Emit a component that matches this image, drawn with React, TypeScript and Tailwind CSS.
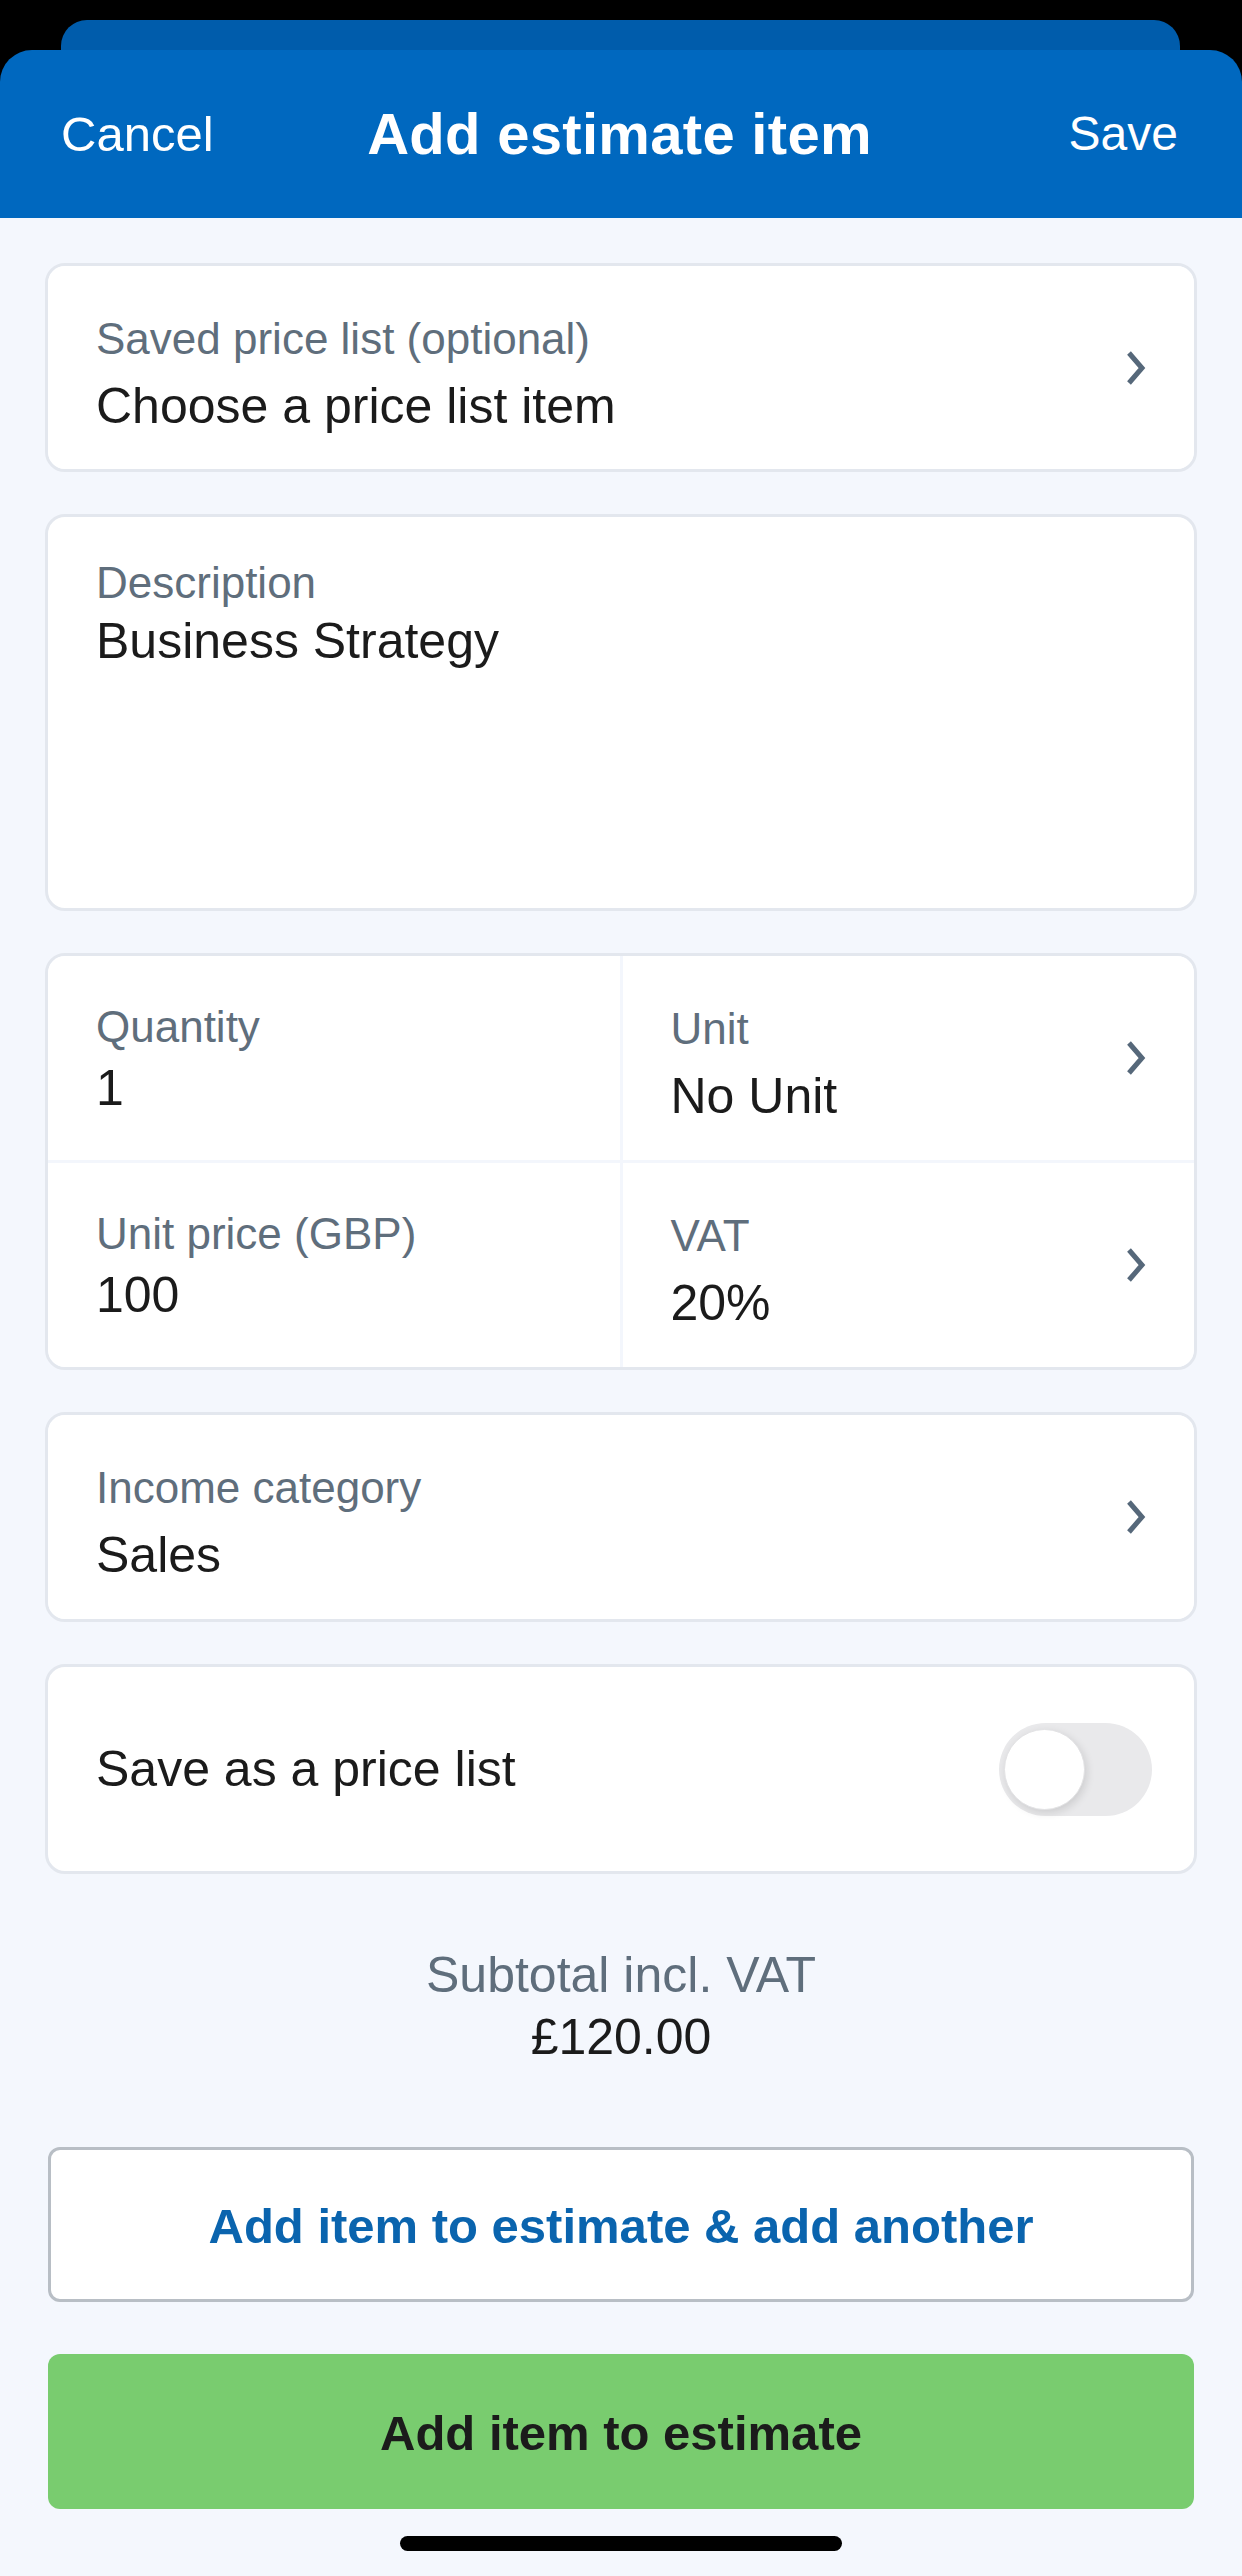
import React from 'react';

const Chevron = () => (
  <svg width="22" height="36" viewBox="0 0 22 36" className="shrink-0">
    <polyline points="4,3 17,18 4,33" fill="none" stroke="#56687a" strokeWidth="5" strokeLinejoin="miter" />
  </svg>
);

interface FieldProps {
  label: string;
  value: string;
  picker?: boolean;
}

// label over value; pickers get a chevron and slightly looser spacing
const Field: React.FC<FieldProps> = ({ label, value, picker }) => (
  <div className="flex h-full bg-white">
    <div className={`flex-1 pl-[48px] ${picker ? 'pt-[47px]' : 'pt-[45px]'}`}>
      <div className="text-[44px] leading-[52px] text-[#5f6e7c]">{label}</div>
      <div className={`${picker ? 'mt-[11px]' : 'mt-[5px]'} text-[50px] leading-[60px] text-[#1b1b1b]`}>{value}</div>
    </div>
    {picker && (
      <div className="flex items-center pr-[47px]">
        <Chevron />
      </div>
    )}
  </div>
);

const Card: React.FC<{ className?: string; children: React.ReactNode }> = ({ className = '', children }) => (
  <div className={`overflow-hidden rounded-[20px] border-[3px] border-[#e3e7ee] bg-white ${className}`}>{children}</div>
);

export default function App() {
  return (
    <div className="flex min-h-[2576px] w-[1242px] flex-col bg-[#f4f7fd] font-['Liberation_Sans',Arial,sans-serif]">
      {/* stacked sheet behind the modal */}
      <div className="bg-black pt-[20px]">
        <div className="ml-[61px] mr-[62px] h-[30px] rounded-t-[26px] bg-[#005cab]" />
      </div>

      <div className="bg-black">
        <header className="grid h-[168px] grid-cols-[1fr_auto_1fr] items-center rounded-t-[32px] bg-[#0068bf] pl-[61px] pr-[64px] text-white">
          <span className="text-[49px] leading-[60px]">Cancel</span>
          <h1 className="text-[58px] font-bold leading-[70px] tracking-[0.3px]">Add estimate item</h1>
          <span className="justify-self-end text-[48px] leading-[60px]">Save</span>
        </header>
      </div>

      <main className="flex flex-col px-[45px] pt-[45px]">
        <div className="flex flex-col gap-[42px]">
          <Card className="h-[209px]">
            <Field label="Saved price list (optional)" value="Choose a price list item" picker />
          </Card>

          <Card className="h-[397px]">
            <div className="pl-[48px] pt-[40px]">
              <div className="text-[44px] leading-[52px] text-[#5f6e7c]">Description</div>
              <div className="mt-[2px] text-[50px] leading-[60px] text-[#1b1b1b]">Business Strategy</div>
            </div>
          </Card>

          <Card className="grid grid-cols-2 grid-rows-[204px_204px] gap-[3px] !bg-[#f3f6fc]">
            <Field label="Quantity" value="1" />
            <Field label="Unit" value="No Unit" picker />
            <Field label="Unit price (GBP)" value="100" />
            <Field label="VAT" value="20%" picker />
          </Card>

          <Card className="h-[210px]">
            <Field label="Income category" value="Sales" picker />
          </Card>

          <Card className="flex h-[210px] items-center justify-between pl-[48px] pr-[42px]">
            <span className="text-[50px] leading-[60px] text-[#1b1b1b]">Save as a price list</span>
            <div className="flex h-[93px] w-[153px] items-center rounded-full bg-[#e9e9eb] pl-[5px]">
              <div className="h-[81px] w-[81px] rounded-full border border-[#e2e2e4] bg-white shadow-[2px_3px_8px_rgba(0,0,0,0.12)]" />
            </div>
          </Card>
        </div>

        <div className="mt-[71px] flex flex-col items-center">
          <span className="text-[50px] leading-[60px] text-[#5f6e7c]">Subtotal incl. VAT</span>
          <span className="mt-[2px] text-[50px] leading-[60px] text-[#1b1b1b]">£120.00</span>
        </div>

        <div className="mx-[3px] mt-[80px] flex flex-col gap-[52px]">
          <button className="flex h-[155px] items-center justify-center rounded-[12px] border-[3px] border-[#b8bec5] bg-white pt-[3px] text-[49px] font-bold leading-[60px] text-[#0a64ae]">
            Add item to estimate &amp; add another
          </button>
          <button className="flex h-[155px] items-center justify-center rounded-[12px] bg-[#79cc6f] pt-[2px] text-[49px] font-bold leading-[60px] text-[#1b1b1b]">
            Add item to estimate
          </button>
        </div>

        <div className="mx-auto mt-[27px] h-[15px] w-[442px] rounded-full bg-black" />
      </main>
    </div>
  );
}
